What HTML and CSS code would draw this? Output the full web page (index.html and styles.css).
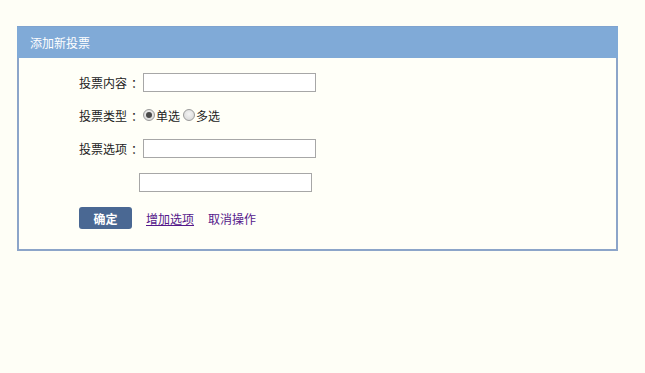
FILE: index.html
```html
<!DOCTYPE html>
<html lang="zh-CN">
<head>
<meta charset="utf-8">
<title>添加新投票</title>
<link rel="stylesheet" href="styles.css">
</head>
<body>
<div class="panel">
  <div class="panel-head">添加新投票</div>
  <div class="panel-body">
    <div class="row">
      <span class="label">投票内容<span class="colon">：</span></span>
      <input class="field" type="text">
    </div>
    <div class="row row-radio">
      <span class="label">投票类型<span class="colon">：</span></span>
      <label class="opt"><input class="radio" type="radio" name="t" checked>单选</label>
      <label class="opt opt-next"><input class="radio" type="radio" name="t">多选</label>
    </div>
    <div class="row">
      <span class="label">投票选项<span class="colon">：</span></span>
      <input class="field" type="text">
    </div>
    <div class="row">
      <input class="field field-extra" type="text">
    </div>
    <div class="row row-actions">
      <button class="btn" type="button">确定</button>
      <a class="link link-add" href="#">增加选项</a>
      <a class="link link-cancel" href="#">取消操作</a>
    </div>
  </div>
</div>
</body>
</html>
```

FILE: styles.css
```css
html, body {
  margin: 0;
  padding: 0;
  background: #fefef6;
}
body {
  font-family: "Noto Sans CJK SC", "Microsoft YaHei", sans-serif;
  font-size: 12px;
  color: #222;
}
.panel {
  margin: 26px 0 0 17px;
  width: 597px;
  border: 2px solid #8ca5c9;
  border-top: 0;
  background: #fffff8;
}
.panel-head {
  height: 31px;
  line-height: 31px;
  background: #80aad7;
  color: #fff;
  font-size: 12px;
  border-top: 1px solid #7fa3cf;
  margin: 0 -2px;
  padding-left: 13px;
}
.panel-body {
  padding: 13px 0 20px 60px;
  display: flex;
  flex-direction: column;
  gap: 12px;
}
.row {
  display: flex;
  align-items: center;
  height: 22px;
}
.row-radio {
  height: 20px;
}
.row-actions {
  margin-top: 2px;
}
.label {
  display: flex;
  align-items: center;
  white-space: nowrap;
  color: #222;
}
.colon {
  display: inline-block;
  padding-left: 4px;
}
.field {
  box-sizing: border-box;
  width: 173px;
  height: 19px;
  margin: 0;
  border: 1px solid #a7a7a7;
  background: #fff;
  padding: 0 2px;
}
.field-extra {
  margin-left: 60px;
}
.opt {
  display: flex;
  align-items: center;
  color: #222;
}
.opt-next {
  margin-left: 3px;
}
.radio {
  appearance: none;
  -webkit-appearance: none;
  box-sizing: border-box;
  width: 12px;
  height: 12px;
  margin: 0 1px 0 0;
  border-radius: 50%;
  border: 1px solid #9a9a9a;
  background: radial-gradient(circle at 50% 40%, #f4f4f4 0%, #d4d4d4 100%);
  position: relative;
}
.radio:checked::after {
  content: "";
  position: absolute;
  left: 2px;
  top: 2px;
  width: 6px;
  height: 6px;
  border-radius: 50%;
  background: #4a4a4a;
}
.btn {
  width: 53px;
  height: 22px;
  border: 0;
  border-radius: 3px;
  background: #4a6893;
  color: #fff;
  font-family: inherit;
  font-size: 12px;
  font-weight: bold;
  padding: 0;
  margin-right: 14px;
}
.link {
  color: #55198b;
  font-size: 12px;
}
.link-add {
  text-decoration: underline;
  margin-right: 14px;
}
.link-cancel {
  text-decoration: none;
}
```
